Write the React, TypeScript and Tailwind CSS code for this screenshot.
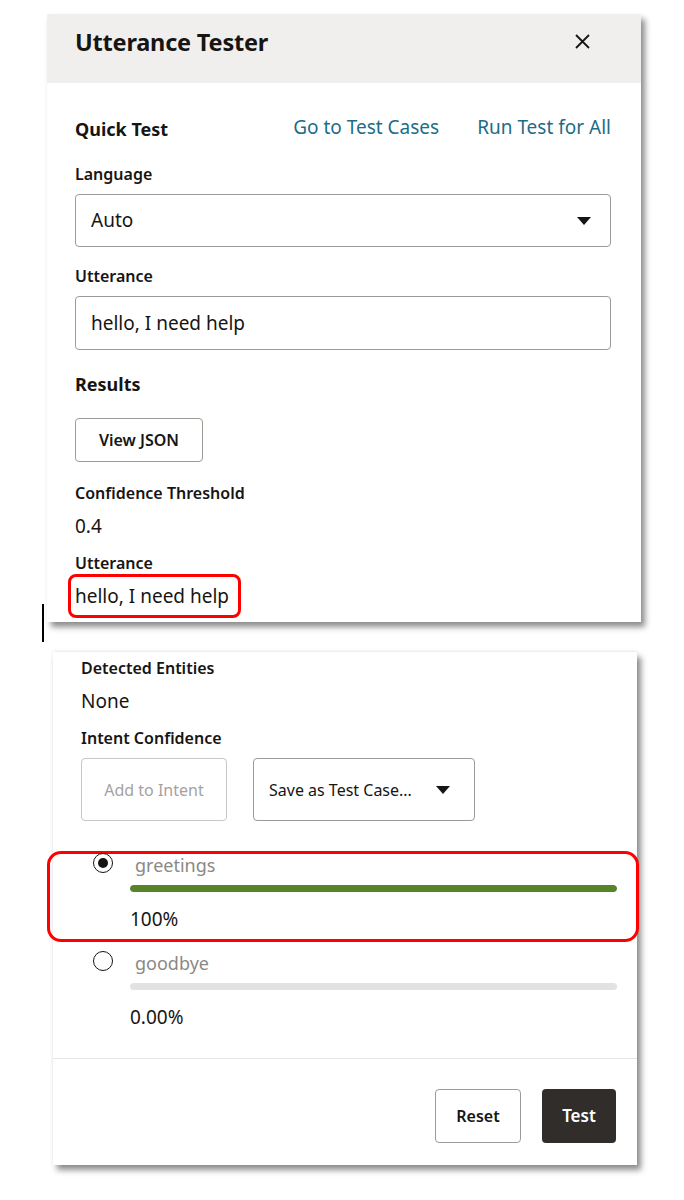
import React from "react";

function Caret() {
    return (
        <svg width="14" height="8" viewBox="0 0 14 8" className="shrink-0">
            <path d="M0 0 L14 0 L7 8 Z" fill="#161513" />
        </svg>
    );
}

function Radio({ checked }: { checked: boolean }) {
    return (
        <div className="w-[20px] h-[20px] rounded-full border-[1.5px] border-[#161513] bg-white flex items-center justify-center">
            {checked && <div className="w-[10px] h-[10px] rounded-full bg-[#161513]" />}
        </div>
    );
}

function IntentRow({ name, pct, value, highlight }: { name: string; pct: number; value: string; highlight: boolean }) {
    return (
        <div className={`${highlight ? "border-[#ff0000]" : "border-transparent"} border-[3px] rounded-[14px] grid grid-cols-[20px_1fr] gap-x-[17px] pl-[43px] pr-[19px] pb-[7px]`}>
            <div className="-mt-[1px]">
                <Radio checked={highlight} />
            </div>
            <div>
                <div className="pl-[5px] text-[18px] leading-[22px] text-[#8b8885]">{name}</div>
                <div className="mt-[9px] h-[7px] rounded-full bg-[#e4e2e0] overflow-hidden">
                    <div className="h-full rounded-full bg-[#578428]" style={{ width: `${pct}%` }} />
                </div>
                <div className="mt-[14px] text-[19px] leading-[26px] text-[#161513]">{value}</div>
            </div>
        </div>
    );
}

export default function App() {
    return (
        <div className="min-h-screen bg-white font-['Noto_Sans',sans-serif] text-[#161513] pt-[14px]">
            {/* first panel */}
            <div className="relative">
                <div className="ml-[47px] w-[594px] bg-white shadow-[4px_5px_6px_rgba(0,0,0,0.45)]">
                    <div className="h-[69px] bg-[#f1efed] flex items-start justify-between pt-[14px] pl-[28px] pr-[51px]">
                        <h1 className="text-[23.5px] leading-[28px] font-bold tracking-[-0.2px]">Utterance Tester</h1>
                        <svg width="15" height="15" viewBox="0 0 15 15" className="mt-[6px]">
                            <path d="M1 1 L14 14 M14 1 L1 14" stroke="#161513" strokeWidth="1.8" />
                        </svg>
                    </div>
                    <div className="pl-[28px] pr-[30px] pt-[34px] pb-[4px]">
                        <div className="flex items-center h-[24px]">
                            <h2 className="text-[18px] font-bold">Quick Test</h2>
                            <a className="ml-auto -mt-[4px] text-[19px] text-[#1d6c88]">Go to Test Cases</a>
                            <a className="ml-[38px] -mt-[4px] text-[19px] text-[#1d6c88]">Run Test for All</a>
                        </div>
                        <div className="mt-[22px] text-[16px] leading-[22px] font-semibold">Language</div>
                        <div className="mt-[9px] h-[53px] border border-[#9e9a96] rounded-[4px] flex items-center pl-[15px] pr-[19px]">
                            <span className="text-[19px]">Auto</span>
                            <span className="ml-auto"><Caret /></span>
                        </div>
                        <div className="mt-[18px] text-[16px] leading-[22px] font-semibold">Utterance</div>
                        <div className="mt-[9px] h-[54px] border border-[#9e9a96] rounded-[4px] flex items-center pl-[15px]">
                            <span className="text-[19px]">hello, I need help</span>
                        </div>
                        <h2 className="mt-[22px] text-[18px] leading-[24px] font-bold">Results</h2>
                        <button className="mt-[22px] h-[44px] w-[128px] border border-[#9e9a96] rounded-[4px] text-[16px] font-semibold">View JSON</button>
                        <div className="mt-[20px] text-[16px] leading-[22px] font-semibold">Confidence Threshold</div>
                        <div className="mt-[9px] text-[19px] leading-[26px]">0.4</div>
                        <div className="mt-[13px] text-[16px] leading-[22px] font-semibold">Utterance</div>
                        <div className="-ml-[7px] w-[173px] h-[44px] border-[3px] border-[#ff0000] rounded-[8px] flex items-center pl-[4px]">
                            <span className="text-[19px]">hello, I need help</span>
                        </div>
                    </div>
                </div>
                <div className="absolute left-[42px] top-[590px] w-[2px] h-[38px] bg-black" />
            </div>

            {/* second panel */}
            <div className="mt-[30px] ml-[53px] w-[584px] bg-white shadow-[4px_5px_6px_rgba(0,0,0,0.45),0_-1px_3px_rgba(0,0,0,0.08)] pt-[5px] pb-[22px]">
                <div className="px-[28px]">
                    <div className="text-[16px] leading-[22px] font-semibold">Detected Entities</div>
                    <div className="mt-[9px] text-[19px] leading-[26px]">None</div>
                    <div className="mt-[13px] text-[16px] leading-[22px] font-semibold">Intent Confidence</div>
                    <div className="mt-[9px] flex gap-[26px]">
                        <button className="h-[63px] w-[146px] border border-[#c9c6c3] rounded-[4px] text-[16px] text-[#a5a29f]">Add to Intent</button>
                        <button className="h-[63px] w-[222px] border border-[#9e9a96] rounded-[4px] text-[16px] flex items-center pl-[15px] pr-[24px]">
                            <span>Save as Test Case...</span>
                            <span className="ml-auto"><Caret /></span>
                        </button>
                    </div>
                </div>
                <div className="mt-[30px] -ml-[6px] -mr-[2px] flex flex-col gap-[7px]">
                    <IntentRow name="greetings" pct={100} value="100%" highlight={true} />
                    <IntentRow name="goodbye" pct={0} value="0.00%" highlight={false} />
                </div>
                <div className="mt-[18px] h-px bg-[#e8e6e3]" />
                <div className="mt-[30px] flex justify-end gap-[21px] pr-[21px]">
                    <button className="h-[54px] w-[86px] border border-[#9e9a96] rounded-[4px] text-[16px] font-semibold">Reset</button>
                    <button className="h-[54px] w-[74px] rounded-[4px] bg-[#312d2a] text-white text-[17px] font-semibold">Test</button>
                </div>
            </div>
        </div>
    );
}
